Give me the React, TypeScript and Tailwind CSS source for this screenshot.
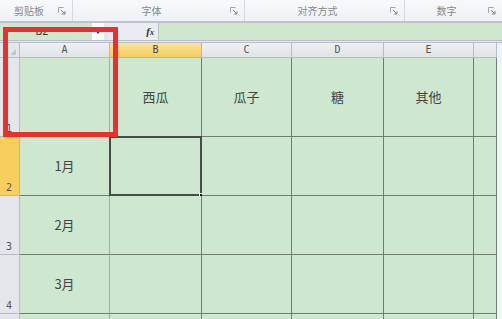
import React from "react";

const cols = [
  { l: "A", w: 90 },
  { l: "B", w: 92 },
  { l: "C", w: 90 },
  { l: "D", w: 92 },
  { l: "E", w: 90 },
  { l: "", w: 23 },
];

const rows: { n: string; h: number; cells: string[] }[] = [
  { n: "1", h: 79, cells: ["", "西瓜", "瓜子", "糖", "其他", ""] },
  { n: "2", h: 59, cells: ["1月", "", "", "", "", ""] },
  { n: "3", h: 59, cells: ["2月", "", "", "", "", ""] },
  { n: "4", h: 59, cells: ["3月", "", "", "", "", ""] },
  { n: "", h: 40, cells: ["", "", "", "", "", ""] },
];

function Launcher() {
  return (
    <svg width="8" height="8" viewBox="0 0 8 8" className="shrink-0">
      <path d="M0.5 0.5h5" stroke="#a0a6ae" strokeWidth="1" />
      <path d="M0.5 0.5v5" stroke="#a0a6ae" strokeWidth="1" />
      <path d="M3 3l4 4M7 4v3H4" stroke="#7d848c" strokeWidth="1" fill="none" />
    </svg>
  );
}

function Group({ w, label, last }: { w: number; label: string; last?: boolean }) {
  return (
    <div
      className={`relative flex h-full items-center justify-center pr-[14px] ${last ? "" : "border-r border-[#d5d9df]"}`}
      style={{ width: w }}
    >
      <span className="text-[10px] text-[#85888d]">{label}</span>
      <div className="absolute right-[6px] top-[7px]">
        <Launcher />
      </div>
    </div>
  );
}

export default function App() {
  return (
    <div
      className="relative h-[319px] w-[502px] overflow-hidden bg-white"
      style={{ fontFamily: '"Noto Sans CJK SC", "DejaVu Sans", sans-serif' }}
    >
      {/* ribbon group labels */}
      <div className="flex h-[21px] bg-gradient-to-b from-[#f7f9fb] to-[#eef1f5]">
        <Group w={73} label="剪贴板" />
        <Group w={172} label="字体" />
        <Group w={160} label="对齐方式" />
        <Group w={97} label="数字" last />
      </div>
      <div className="h-[2px] border-t border-b border-[#bcc3cd] bg-[#e2e6ec]" />
      {/* formula bar */}
      <div className="flex h-[17px] items-stretch bg-[#dfe4ea]">
        <div className="relative flex w-[92px] items-center justify-center bg-[#cde8cf] pr-[8px]">
          <span className="text-[10px] leading-none text-[#333]" style={{ fontFamily: '"DejaVu Sans", sans-serif' }}>
            B2
          </span>
        </div>
        <div className="flex w-[12px] items-center justify-center bg-white">
          <svg width="6" height="4" viewBox="0 0 6 4">
            <path d="M0 0h6L3 4z" fill="#333" />
          </svg>
        </div>
        <div className="w-[4px] bg-[#e4e8ee]" />
        <div className="flex w-[50px] items-center justify-end pr-[4px] bg-[#e8ecf1]">
          <span
            className="text-[11px] italic font-bold leading-none text-[#333]"
            style={{ fontFamily: '"Liberation Serif", serif' }}
          >
            f<span className="text-[8px]">x</span>
          </span>
        </div>
        <div className="flex-1 border-l border-[#b9c2cc] bg-[#cde8cf]" />
      </div>
      <div className="h-[3px] border-t border-b border-[#b7bec8] bg-[#e6e9ee]" />

      {/* sheet */}
      <div className="flex">
        <div className="flex flex-col">
          {/* header row */}
          <div className="flex h-[15px]">
            <div className="relative w-[20px] border-r border-b border-[#b6bcc6] bg-[#e3e6eb]">
              <svg width="6" height="6" viewBox="0 0 6 6" className="absolute bottom-[2px] right-[3px]">
                <path d="M6 0V6H0z" fill="#c2c7ce" />
              </svg>
            </div>
            {cols.map((c, i) => (
              <div
                key={i}
                className={`flex items-center justify-center border-r border-b text-[10px] leading-none ${
                  c.l === "B"
                    ? "border-[#e2b44b] bg-gradient-to-b from-[#fbe29b] to-[#f5cc5c] text-[#444]"
                    : "border-[#b6bcc6] bg-gradient-to-b from-[#eef0f3] to-[#dfe3e8] text-[#555]"
                }`}
                style={{ width: c.w, fontFamily: '"DejaVu Sans Mono", monospace' }}
              >
                {c.l}
              </div>
            ))}
          </div>
          {rows.map((r, ri) => (
            <div key={ri} className="flex" style={{ height: r.h }}>
              <div
                className={`flex w-[20px] items-end justify-start border-r border-b pl-[6px] pb-[2px] text-[10px] leading-none ${
                  r.n === "2"
                    ? "border-[#e2b44b] bg-[#f8cf5d] text-[#555]"
                    : "border-[#b6bcc6] bg-[#e3e6eb] text-[#555]"
                }`}
                style={{ fontFamily: '"DejaVu Sans Mono", monospace' }}
              >
                {r.n}
              </div>
              {cols.map((c, ci) => (
                <div
                  key={ci}
                  className={`relative flex items-center justify-center border-b border-r bg-[#cde8cf] text-[13px] text-[#444] ${
                    ci === 0 ? "border-r-[#9fb1a1] border-b-[#6e7f70]" : "border-[#6e7f70]"
                  }`}
                  style={{ width: c.w }}
                >
                  {r.cells[ci]}
                  {ri === 1 && ci === 1 && (
                    <div className="absolute -left-[1px] -top-[1px] h-[calc(100%+2px)] w-[calc(100%+2px)] border-2 border-[#4a4a4a]">
                      <div className="absolute -bottom-[4px] -right-[4px] h-[5px] w-[5px] border border-white bg-[#111]" />
                    </div>
                  )}
                </div>
              ))}
            </div>
          ))}
        </div>
        <div className="flex-1 bg-[#eef3f9]" />
      </div>

      {/* red annotation box */}
      <div className="pointer-events-none absolute left-[3px] top-[27px] h-[110px] w-[115px] border-[5px] border-[#ee2d2d]" />
    </div>
  );
}
